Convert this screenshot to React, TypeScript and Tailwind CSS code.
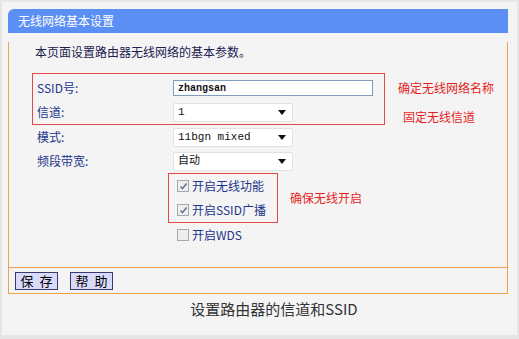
import React from "react";

const cjk = "font-['SimSun','Noto_Sans_CJK_SC',sans-serif]";

const Select = ({ value }: { value: string }) => (
  <div className="flex h-[19px] w-[120px] items-center justify-between rounded-[2px] border border-[#e2e2e2] bg-white pl-[4px] pr-[6px]">
    <span className="font-['Liberation_Mono','Noto_Sans_CJK_SC',monospace] text-[11px] text-[#111]">{value}</span>
    <svg width="8" height="5" viewBox="0 0 8 5">
      <path d="M0 0h8L4 5z" fill="#111" />
    </svg>
  </div>
);

const Check = ({ checked, label }: { checked: boolean; label: string }) => (
  <div className="flex h-[24px] items-center gap-[3px]">
    <div className="flex h-[12px] w-[12px] items-center justify-center border border-[#a8a8a8] bg-[#eeeeee]">
      {checked && (
        <svg width="9" height="9" viewBox="0 0 9 9">
          <path d="M1.5 4.5l2 2.2L7.5 1.5" stroke="#5f6f8f" strokeWidth="1.4" fill="none" />
        </svg>
      )}
    </div>
    <span className="text-[12px] text-[#22358a]">{label}</span>
  </div>
);

const Row = ({ label, children }: { label: string; children: React.ReactNode }) => (
  <div className="flex h-[24px] items-center">
    <span className="w-[140px] shrink-0 pl-[4px] text-[12px] text-[#22358a]">{label}</span>
    {children}
  </div>
);

const Btn = ({ a, b }: { a: string; b: string }) => (
  <button className="flex h-[18px] w-[43px] items-center justify-center gap-[6px] border border-[#3a3a70] bg-[#d9d9fa] text-[13px] leading-none text-black">
    <span>{a}</span>
    <span>{b}</span>
  </button>
);

export default function App() {
  return (
    <div className={`h-[339px] w-[519px] bg-[#e6e6e6] p-[2px] ${cjk}`}>
      <div className="flex h-[333px] flex-col bg-[#f4f4f4] pl-[6px] pt-[7px]">
        <div className="w-[500px]">
          <div className="flex h-[24px] items-center rounded-tl-[6px] bg-[#5b8ff3] pl-[10px] text-[12px] text-white">
            无线网络基本设置
          </div>
          <div className="h-[226px] border-x border-b border-[#f2a24c] bg-[#f4f4f4]">
            <div className="ml-[26px] mt-[9px] flex h-[20px] items-center text-[12px] text-[#1c2050]">
              本页面设置路由器无线网络的基本参数。
            </div>
            <div className="mt-[11px] flex h-[52px]">
              <div className="ml-[23px] h-[52px] w-[353px] border border-[#e54848] pt-[2px]">
                <Row label="SSID号:">
                  <div className="flex h-[16px] w-[200px] items-center border border-[#7f9db9] bg-white pl-[4px] font-['Liberation_Mono',monospace] text-[10px] font-bold text-[#111]">
                    zhangsan
                  </div>
                </Row>
                <Row label="信道:">
                  <Select value="1" />
                </Row>
              </div>
              <div className="ml-[13px] h-[52px] pt-[5px] text-[12px] text-[#e41e1e]">
                <div className="flex h-[20px] items-center">确定无线网络名称</div>
                <div className="mt-[9px] flex h-[20px] items-center pl-[5px]">固定无线信道</div>
              </div>
            </div>
            <div className="pl-[24px]">
              <Row label="模式:">
                <Select value="11bgn mixed" />
              </Row>
              <Row label="频段带宽:">
                <Select value="自动" />
              </Row>
            </div>
            <div className="flex items-center">
              <div className="ml-[159px] w-[110px] border border-[#e54848] pl-[8px]">
                <Check checked label="开启无线功能" />
                <Check checked label="开启SSID广播" />
              </div>
              <span className="ml-[12px] text-[12px] text-[#e41e1e]">确保无线开启</span>
            </div>
            <div className="ml-[168px]">
              <Check checked={false} label="开启WDS" />
            </div>
          </div>
          <div className="flex h-[26px] items-center gap-[12px] border-x border-b border-[#f2a24c] bg-[#f4f4f4] pl-[6px]">
            <Btn a="保" b="存" />
            <Btn a="帮" b="助" />
          </div>
        </div>
        <div className="mt-[4px] w-[500px] pl-[32px] text-center font-['Noto_Sans_CJK_SC',sans-serif] text-[15px] text-[#333]">
          设置路由器的信道和SSID
        </div>
      </div>
    </div>
  );
}
